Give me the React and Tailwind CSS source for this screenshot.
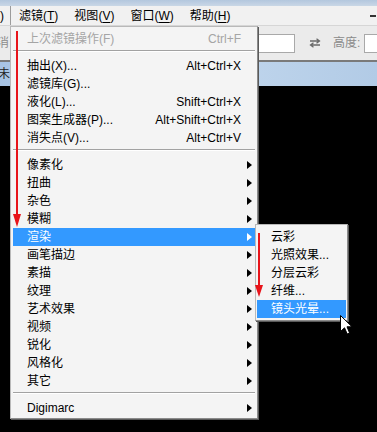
import React from "react";

const FONT = "font-['Liberation_Sans','Noto_Sans_CJK_SC',sans-serif]";

function Tri({ white }) {
  return (
    <span
      className={
        white
          ? "block h-0 w-0 border-y-[4px] border-l-[5px] border-y-transparent border-l-white"
          : "block h-0 w-0 border-y-[4px] border-l-[5px] border-y-transparent border-l-black"
      }
    />
  );
}

function Item({ label, shortcut, arrow, disabled, active }) {
  const tone = active
    ? "bg-[#3399ff] text-white"
    : disabled
    ? "text-[#a5a5a5]"
    : "text-black";
  return (
    <div className={`flex h-[18px] items-center pl-[14px] ${tone}`}>
      <span className="flex-1 whitespace-nowrap leading-none">{label}</span>
      {shortcut && <span className="whitespace-nowrap leading-none">{shortcut}</span>}
      <span className="flex w-[14px] items-center pl-[6px]">{arrow && <Tri white={active} />}</span>
    </div>
  );
}

function SubItem({ label, active }) {
  return (
    <div
      className={
        active
          ? "flex h-[18px] items-center bg-[#3399ff] pl-[14px] text-white"
          : "flex h-[18px] items-center pl-[14px] text-black"
      }
    >
      <span className="whitespace-nowrap leading-none">{label}</span>
    </div>
  );
}

function Sep() {
  return (
    <div className="h-[9px] pt-[2px]">
      <div className="border-t border-b border-t-[#a2a2a2] border-b-white" />
    </div>
  );
}

const mainMenu = [
  { label: "上次滤镜操作(F)", shortcut: "Ctrl+F", disabled: true },
  "sep",
  { label: "抽出(X)...", shortcut: "Alt+Ctrl+X" },
  { label: "滤镜库(G)..." },
  { label: "液化(L)...", shortcut: "Shift+Ctrl+X" },
  { label: "图案生成器(P)...", shortcut: "Alt+Shift+Ctrl+X" },
  { label: "消失点(V)...", shortcut: "Alt+Ctrl+V" },
  "sep",
  { label: "像素化", arrow: true },
  { label: "扭曲", arrow: true },
  { label: "杂色", arrow: true },
  { label: "模糊", arrow: true },
  { label: "渲染", arrow: true, active: true },
  { label: "画笔描边", arrow: true },
  { label: "素描", arrow: true },
  { label: "纹理", arrow: true },
  { label: "艺术效果", arrow: true },
  { label: "视频", arrow: true },
  { label: "锐化", arrow: true },
  { label: "风格化", arrow: true },
  { label: "其它", arrow: true },
  "sep",
  { label: "Digimarc", arrow: true },
];

const subMenu = [
  { label: "云彩" },
  { label: "光照效果..." },
  { label: "分层云彩" },
  { label: "纤维..." },
  { label: "镜头光晕...", active: true },
];

function MenuBarItem({ name, accel, pressed }) {
  return (
    <div
      className={
        pressed
          ? "flex h-full items-center border-l border-l-[#9c9c9c] px-[8px]"
          : "flex h-full items-center px-[8px]"
      }
    >
      <span className="whitespace-nowrap leading-none">
        {name}(<span className="underline underline-offset-[2px]">{accel}</span>)
      </span>
    </div>
  );
}

export default function App() {
  return (
    <div className={`relative flex h-[432px] w-[377px] flex-col overflow-hidden bg-black text-[12px] ${FONT}`}>
      {/* window top strip */}
      <div className="h-[6px] bg-gradient-to-b from-[#b3c7de] to-[#c9d7e6]" />
      {/* menu bar */}
      <div className="flex h-[20px] items-center border-b border-b-[#d6d6d6] bg-[#f1f1f1] text-black">
        <div className="w-[10px] leading-none">)</div>
        <MenuBarItem name="滤镜" accel="T" pressed />
        <MenuBarItem name="视图" accel="V" />
        <MenuBarItem name="窗口" accel="W" />
        <MenuBarItem name="帮助" accel="H" />
        <div className="ml-auto mr-[1px] h-[2px] w-[6px] bg-[#333]" />
      </div>
      {/* tool options bar */}
      <div className="flex h-[36px] items-center border-b-2 border-b-[#7a7a7a] bg-[#ebebeb]">
        <span className="-ml-[3px] w-[14px] flex-none text-[#8c8c8c]">消</span>
        <div className="ml-[224px] h-[19px] w-[60px] flex-none border border-[#a9a9a9] bg-white" />
        <svg className="ml-[14px] flex-none" width="12" height="10" viewBox="0 0 12 10">
          <path d="M1 3 H10 M7.5 0.8 L10.5 3 L7.5 5.2" fill="none" stroke="#6a6a6a" strokeWidth="1.3" />
          <path d="M11 7 H2 M4.5 4.8 L1.5 7 L4.5 9.2" fill="none" stroke="#6a6a6a" strokeWidth="1.3" />
        </svg>
        <span className="ml-[12px] flex-none whitespace-nowrap text-[#8a8a8a]">高度:</span>
        <div className="ml-[4px] h-[19px] w-[30px] flex-none border border-[#a9a9a9] bg-white" />
      </div>
      {/* document title bar */}
      <div className="flex h-[24px] items-center bg-gradient-to-r from-[#a8c4e4] via-[#c3d8ee] to-[#b2cbe6]">
        <span className="-ml-[2px] text-[#222]">未</span>
      </div>
      <div className="flex-1 bg-black" />

      {/* main dropdown */}
      <div className="absolute left-[10px] top-[26px] w-[248px] border border-[#b9b9b9] border-r-[#8b8b8b] border-b-[#8b8b8b] bg-[#f4f4f4] px-[2px] pb-[1px] pt-[3px] shadow-[1px_1px_0_#5a5a5a]">
        {mainMenu.map((it, i) =>
          it === "sep" ? <Sep key={i} /> : <Item key={i} {...it} />
        )}
      </div>

      {/* submenu */}
      <div className="absolute left-[255px] top-[224px] w-[93px] border border-[#b9b9b9] border-r-[#8b8b8b] border-b-[#8b8b8b] bg-[#f4f4f4] px-[1px] pb-[2px] pt-[3px] shadow-[1px_1px_0_#5a5a5a]">
        {subMenu.map((it, i) => (
          <SubItem key={i} {...it} />
        ))}
      </div>

      {/* red annotation arrows */}
      <svg className="pointer-events-none absolute left-0 top-0" width="377" height="432" viewBox="0 0 377 432">
        <line x1="17" y1="31" x2="17" y2="216" stroke="#e8141a" strokeWidth="2" />
        <polygon points="13,214 21,214 17,227" fill="#e8141a" />
        <line x1="259" y1="233" x2="259" y2="287" stroke="#e8141a" strokeWidth="2" />
        <polygon points="255,285 263,285 259,297" fill="#e8141a" />
      </svg>

      {/* mouse cursor */}
      <svg className="pointer-events-none absolute left-[340px] top-[315px]" width="13" height="21" viewBox="0 0 13 21">
        <path
          d="M0.5 0.5 L0.5 16.5 L4.5 12.8 L7.2 19 L9.6 18 L7 11.8 L12 11.8 Z"
          fill="#ffffff"
          stroke="#000000"
          strokeWidth="1"
          strokeLinejoin="miter"
        />
      </svg>
    </div>
  );
}
